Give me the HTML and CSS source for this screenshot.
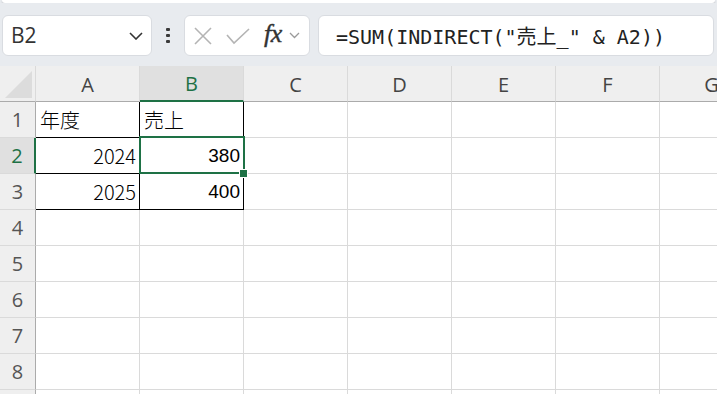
FILE: index.html
```html
<!DOCTYPE html>
<html lang="ja">
<head>
<meta charset="utf-8">
<title>Sheet</title>
<link rel="stylesheet" href="styles.css">
</head>
<body>
<div class="app">
  <div class="ribbon-edge"></div>
  <div class="formula-bar">
    <div class="namebox">
      <span class="name">B2</span>
      <svg class="chev" width="14" height="8" viewBox="0 0 14 8"><path d="M1 1 L7 7 L13 1" fill="none" stroke="#333" stroke-width="1.6"/></svg>
    </div>
    <div class="dots"><span></span><span></span><span></span></div>
    <div class="fxbox">
      <svg class="icon" width="20" height="20" viewBox="0 0 20 20"><path d="M2 2 L18 18 M18 2 L2 18" stroke="#b4b4b4" stroke-width="1.6" fill="none"/></svg>
      <svg class="icon" width="24" height="20" viewBox="0 0 24 20"><path d="M1 9 L8 17 L23 3" stroke="#b4b4b4" stroke-width="1.6" fill="none"/></svg>
      <span class="fx">fx</span>
      <svg class="chev small" width="11" height="7" viewBox="0 0 11 7"><path d="M1 1 L5.5 5.5 L10 1" fill="none" stroke="#9a9a9a" stroke-width="1.3"/></svg>
    </div>
    <div class="formula">=SUM(INDIRECT("売上_" &amp; A2))</div>
  </div>
  <div class="sheet">
    <div class="corner"><div class="tri"></div></div>
    <div class="colh">A</div>
    <div class="colh sel">B</div>
    <div class="colh">C</div>
    <div class="colh">D</div>
    <div class="colh">E</div>
    <div class="colh">F</div>
    <div class="colh">G</div>

    <div class="rowh">1</div>
    <div class="cell bd">年度</div>
    <div class="cell bd">売上</div>
    <div class="cell"></div><div class="cell"></div><div class="cell"></div><div class="cell"></div><div class="cell"></div>

    <div class="rowh sel">2</div>
    <div class="cell bd num">2024</div>
    <div class="cell bd num val active">380</div>
    <div class="cell"></div><div class="cell"></div><div class="cell"></div><div class="cell"></div><div class="cell"></div>

    <div class="rowh">3</div>
    <div class="cell bd num">2025</div>
    <div class="cell bd num val">400</div>
    <div class="cell"></div><div class="cell"></div><div class="cell"></div><div class="cell"></div><div class="cell"></div>

    <div class="rowh">4</div>
    <div class="cell"></div><div class="cell"></div><div class="cell"></div><div class="cell"></div><div class="cell"></div><div class="cell"></div><div class="cell"></div>
    <div class="rowh">5</div>
    <div class="cell"></div><div class="cell"></div><div class="cell"></div><div class="cell"></div><div class="cell"></div><div class="cell"></div><div class="cell"></div>
    <div class="rowh">6</div>
    <div class="cell"></div><div class="cell"></div><div class="cell"></div><div class="cell"></div><div class="cell"></div><div class="cell"></div><div class="cell"></div>
    <div class="rowh">7</div>
    <div class="cell"></div><div class="cell"></div><div class="cell"></div><div class="cell"></div><div class="cell"></div><div class="cell"></div><div class="cell"></div>
    <div class="rowh">8</div>
    <div class="cell"></div><div class="cell"></div><div class="cell"></div><div class="cell"></div><div class="cell"></div><div class="cell"></div><div class="cell"></div>
    <div class="rowh"></div>
    <div class="cell"></div><div class="cell"></div><div class="cell"></div><div class="cell"></div><div class="cell"></div><div class="cell"></div><div class="cell"></div>
  </div>
</div>
</body>
</html>
```

FILE: styles.css
```css
* { box-sizing: border-box; }
html, body { margin: 0; padding: 0; }
body {
  background: #ffffff;
  font-family: "Noto Sans CJK JP", "Noto Sans", sans-serif;
  overflow: hidden;
}
.app {
  width: 717px;
  height: 394px;
  overflow: hidden;
  background: #e8ebef;
}
.ribbon-edge {
  height: 3px;
  margin: 0 2px;
  background: #ffffff;
  border-radius: 0 0 5px 5px;
  box-shadow: 0 1px 2px rgba(0,0,0,0.18);
}
.formula-bar {
  height: 63px;
  display: flex;
  align-items: flex-start;
  padding: 12px 0 0 2px;
  background: #e8ebef;
}
.namebox {
  width: 150px;
  height: 41px;
  background: #fff;
  border: 1px solid #d9dce1;
  border-radius: 6px;
  display: flex;
  align-items: center;
  justify-content: space-between;
  padding: 0 8px 0 8px;
}
.name {
  font-family: "Open Sans", "Noto Sans", sans-serif;
  font-size: 21px;
  color: #333;
  line-height: 1;
}
.dots {
  width: 32px;
  height: 41px;
  display: flex;
  flex-direction: column;
  align-items: center;
  justify-content: center;
  gap: 3px;
}
.dots span {
  width: 4px;
  height: 3px;
  background: #3a3a3a;
  border-radius: 1px;
}
.fxbox {
  width: 126px;
  height: 41px;
  background: #fff;
  border: 1px solid #d9dce1;
  border-radius: 6px;
  display: flex;
  align-items: center;
  padding: 0 6px 0 8px;
}
.fxbox .icon:first-child { margin-right: 13px; }
.fxbox .icon:nth-child(2) { margin-right: 14px; }
.fx {
  font-family: "Liberation Serif", "DejaVu Serif", serif;
  font-style: italic;
  font-size: 26px;
  color: #333;
  line-height: 1;
  margin-top: -3px;
  margin-right: 7px;
  letter-spacing: -0.5px;
  -webkit-text-stroke: 0.4px #333;
}
.formula {
  flex: 1;
  height: 41px;
  margin-left: 8px;
  margin-right: 3px;
  background: #fff;
  border: 1px solid #d9dce1;
  border-radius: 6px;
  display: flex;
  align-items: center;
  padding-left: 17px;
  font-family: "DejaVu Sans Mono", "Noto Sans CJK JP", monospace;
  font-size: 20px;
  color: #222;
  white-space: pre;
}
.sheet {
  display: grid;
  grid-template-columns: 36px repeat(7, 104px);
  grid-auto-rows: 36px;
  background: #fff;
}
.corner {
  background: #efefef;
  border-right: 1px solid #dadada;
  border-bottom: 1px solid #ababab;
  position: relative;
}
.tri {
  position: absolute;
  right: 3px;
  bottom: 3px;
  width: 0;
  height: 0;
  border-left: 27px solid transparent;
  border-bottom: 27px solid #dcdcdc;
}
.colh {
  background: #efefef;
  border-right: 1px solid #dadada;
  border-bottom: 1px solid #ababab;
  display: flex;
  align-items: center;
  justify-content: center;
  font-family: "Open Sans", "Noto Sans", sans-serif;
  font-size: 20px;
  color: #444;
  padding-top: 1px;
}
.colh.sel {
  background: #e0e0e0;
  color: #1e7145;
  border-bottom: 2px solid #1e7145;
}
.rowh {
  background: #efefef;
  border-right: 1px solid #ababab;
  border-bottom: 1px solid #dadada;
  display: flex;
  align-items: center;
  justify-content: center;
  font-family: "Open Sans", "Noto Sans", sans-serif;
  font-size: 20px;
  color: #555;
}
.rowh.sel {
  background: #e0e0e0;
  color: #1e7145;
  border-right: 2px solid #1e7145;
}
.cell {
  border-right: 1px solid #dadada;
  border-bottom: 1px solid #dadada;
  display: flex;
  align-items: center;
  padding: 0 3px 0 4px;
  font-size: 20px;
  font-weight: 300;
  color: #000;
}
.cell.bd {
  border-right-color: #000;
  border-bottom-color: #000;
}
.cell.num { justify-content: flex-end; }
.cell.val {
  font-family: "Liberation Sans", Arial, sans-serif;
  font-size: 19px;
  font-weight: 400;
  color: #000;
}
.cell.active { position: relative; }
.cell.active::after {
  content: "";
  position: absolute;
  left: -1px;
  top: -2px;
  right: -2px;
  bottom: -1px;
  border: 2px solid #1e7145;
}
.cell.active::before {
  content: "";
  position: absolute;
  right: -5px;
  bottom: -5px;
  width: 7px;
  height: 7px;
  background: #1e7145;
  border: 1px solid #fff;
  z-index: 2;
}
```
